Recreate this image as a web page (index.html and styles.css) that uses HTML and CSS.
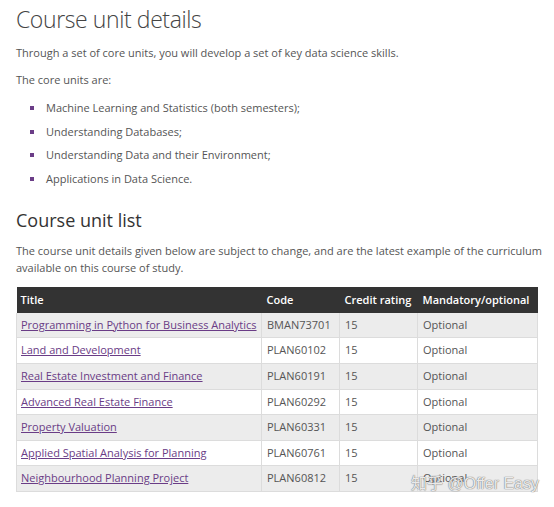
FILE: index.html
```html
<!DOCTYPE html>
<html>
<head>
<meta charset="utf-8">
<link rel="stylesheet" href="styles.css">
</head>
<body>
<div class="page">
  <h1 class="title">Course unit details</h1>
  <p class="text">Through a set of core units, you will develop a set of key data science skills.</p>
  <p class="text">The core units are:</p>
  <ul class="units">
    <li>Machine Learning and Statistics (both semesters);</li>
    <li>Understanding Databases;</li>
    <li>Understanding Data and their Environment;</li>
    <li>Applications in Data Science.</li>
  </ul>
  <h2 class="subtitle">Course unit list</h2>
  <p class="text">The course unit details given below are subject to change, and are the latest example of the curriculum available on this course of study.</p>
  <table class="list">
    <colgroup>
      <col class="w-title"><col class="w-code"><col class="w-credit"><col class="w-mand">
    </colgroup>
    <thead>
      <tr><th>Title</th><th>Code</th><th>Credit rating</th><th>Mandatory/optional</th></tr>
    </thead>
    <tbody>
      <tr><td><a href="#">Programming in Python for Business Analytics</a></td><td>BMAN73701</td><td>15</td><td>Optional</td></tr>
      <tr><td><a href="#">Land and Development</a></td><td>PLAN60102</td><td>15</td><td>Optional</td></tr>
      <tr><td><a href="#">Real Estate Investment and Finance</a></td><td>PLAN60191</td><td>15</td><td>Optional</td></tr>
      <tr><td><a href="#">Advanced Real Estate Finance</a></td><td>PLAN60292</td><td>15</td><td>Optional</td></tr>
      <tr><td><a href="#">Property Valuation</a></td><td>PLAN60331</td><td>15</td><td>Optional</td></tr>
      <tr><td><a href="#">Applied Spatial Analysis for Planning</a></td><td>PLAN60761</td><td>15</td><td>Optional</td></tr>
      <tr><td><a href="#">Neighbourhood Planning Project</a></td><td>PLAN60812</td><td>15</td><td>Optional</td></tr>
    </tbody>
  </table>
  <div class="watermark">知乎 @Offer Easy</div>
</div>
</body>
</html>
```
FILE: styles.css
```css
html, body {
  margin: 0;
  padding: 0;
  background: #fff;
}
body {
  font-family: "Open Sans", "Noto Sans CJK SC", sans-serif;
  font-size: 11px;
  color: #555;
}
.page {
  position: relative;
  padding: 4px 0 0 16px;
  width: 554px;
  height: 507px;
  box-sizing: border-box;
  overflow: hidden;
}
.title {
  margin: 0;
  font-size: 23px;
  line-height: 30px;
  font-weight: 300;
  letter-spacing: -0.4px;
  color: #444;
}
.text {
  margin: 10px 0 0;
  line-height: 17px;
}
.units {
  list-style: none;
  margin: 11px 0 0;
  padding: 0;
}
.units li {
  position: relative;
  padding-left: 30px;
  line-height: 17px;
  margin-bottom: 6.6px;
}
.units li::before {
  content: "";
  position: absolute;
  left: 14px;
  top: 7px;
  width: 4px;
  height: 4px;
  background: #6b3d87;
}
.subtitle {
  margin: 21px 0 0;
  font-size: 18px;
  line-height: 24px;
  font-weight: 400;
  color: #333;
}
.list {
  margin-top: 11px;
  width: 521px;
  border-collapse: collapse;
  table-layout: fixed;
  font-size: 11px;
}
.w-title { width: 245px; }
.w-code { width: 78px; }
.w-credit { width: 78px; }
.w-mand { width: 120px; }
.list th {
  background: #333;
  color: #fff;
  font-weight: 600;
  text-align: left;
  padding: 4px 4px 4px 5px;
  line-height: 18px;
  white-space: nowrap;
}
.list th:first-child { padding-left: 4px; }
.list td {
  padding: 4px 4px 4px 5px;
  line-height: 16.6px;
  border: 1px solid #dcdcdc;
  border-top: none;
  white-space: nowrap;
}
.list td:first-child { padding-left: 4px; }
.list tbody tr:nth-child(odd) td { background: #ececec; }
.list a {
  color: #6a3c86;
  text-decoration: underline;
}
.watermark {
  position: absolute;
  left: 411px;
  top: 470px;
  font-family: "Liberation Sans", "Noto Sans CJK SC", sans-serif;
  font-size: 16px;
  color: rgba(255,255,255,0.85);
  text-shadow: 0 0 1px #777, 0 0 1px #777;
}
```
